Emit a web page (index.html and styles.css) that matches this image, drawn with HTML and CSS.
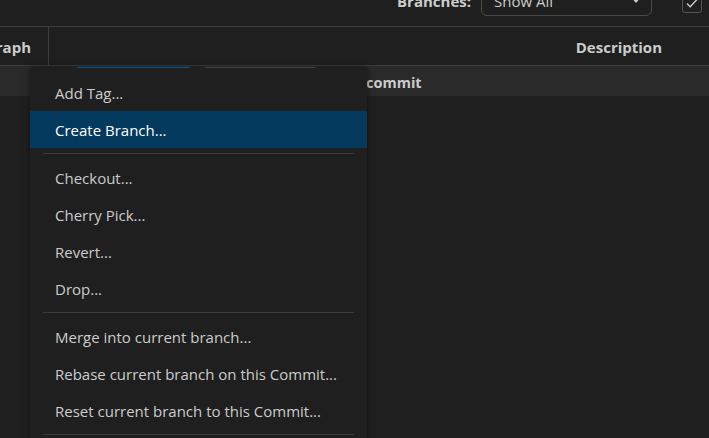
FILE: index.html
```html
<!DOCTYPE html>
<html>
<head>
<meta charset="utf-8">
<link rel="stylesheet" href="styles.css">
</head>
<body>
<div class="app">
  <div class="toolbar">
    <span class="tb-label">Branches:</span>
    <div class="select">
      <span>Show All</span>
      <svg class="caret" width="10" height="6" viewBox="0 0 10 6"><path d="M0 0h10L5 6z" fill="#cccccc"/></svg>
    </div>
    <div class="check">
      <svg width="14" height="12" viewBox="0 0 14 12"><path d="M2 6.5l3.2 3.2L12 2.5" fill="none" stroke="#cccccc" stroke-width="1.4"/></svg>
    </div>
  </div>
  <div class="header">
    <div class="col-graph">raph</div>
    <div class="col-desc">Description</div>
  </div>
  <div class="row">
    <div class="row-graph">
      <span class="pill pill-blue"></span>
      <span class="pill pill-gray"></span>
    </div>
    <div class="row-desc">commit</div>
  </div>
</div>

<div class="menu">
  <div class="item">Add Tag...</div>
  <div class="item active">Create Branch...</div>
  <div class="sep"></div>
  <div class="item">Checkout...</div>
  <div class="item">Cherry Pick...</div>
  <div class="item">Revert...</div>
  <div class="item">Drop...</div>
  <div class="sep"></div>
  <div class="item">Merge into current branch...</div>
  <div class="item">Rebase current branch on this Commit...</div>
  <div class="item">Reset current branch to this Commit...</div>
  <div class="sep"></div>
</div>
</body>
</html>
```

FILE: styles.css
```css
html, body {
  margin: 0;
  padding: 0;
  background: #1f1f1f;
  overflow: hidden;
  height: 438px;
}
body {
  font-family: "Open Sans", "Noto Sans", sans-serif;
  color: #cccccc;
  font-size: 15px;
}
.app {
  width: 709px;
}
.toolbar {
  height: 26px;
  border-bottom: 1px solid #3c3c3c;
  display: flex;
  align-items: flex-start;
  justify-content: flex-end;
  padding-right: 7px;
}
.tb-label {
  font-weight: 700;
  margin-top: -9px;
  margin-right: 10px;
  line-height: 20px;
}
.select {
  width: 171px;
  height: 24px;
  box-sizing: border-box;
  margin-top: -8px;
  border: 1px solid #4a4a4a;
  border-radius: 6px;
  background: #1f1f1f;
  display: flex;
  align-items: flex-start;
  padding: 0 10px 0 12px;
  justify-content: space-between;
  margin-right: 30px;
}
.select span {
  line-height: 20px;
  margin-top: -2px;
}
.caret {
  margin-top: 4px;
}
.check {
  width: 20px;
  height: 20px;
  box-sizing: border-box;
  margin-top: -7px;
  border: 1px solid #555555;
  border-radius: 3px;
  display: flex;
  align-items: center;
  justify-content: center;
}
.header {
  height: 38px;
  border-bottom: 1px solid #3c3c3c;
  display: flex;
  font-weight: 700;
  font-size: 15px;
}
.col-graph {
  width: 49px;
  box-sizing: border-box;
  border-right: 1px solid #3c3c3c;
  display: flex;
  align-items: center;
  justify-content: flex-end;
  padding-right: 17px;
  padding-top: 2px;
}
.col-desc {
  flex: 1;
  display: flex;
  align-items: center;
  justify-content: flex-end;
  padding-right: 47px;
  padding-top: 2px;
}
.row {
  height: 30px;
  background: #2a2a2a;
  display: flex;
}
.row-graph {
  width: 366px;
  position: relative;
}
.pill {
  position: absolute;
  top: 1px;
  height: 9px;
  border-radius: 3px;
}
.pill-blue {
  left: 76px;
  width: 115px;
  border-top: 2px solid #0078d4;
}
.pill-gray {
  left: 204px;
  width: 113px;
  border-top: 2px solid #5a5a5a;
}
.row-desc {
  font-weight: 700;
  font-size: 14.5px;
  display: flex;
  align-items: center;
  padding-top: 2px;
}
.menu {
  position: absolute;
  left: 30px;
  top: 68px;
  width: 337px;
  height: 380px;
  box-sizing: border-box;
  padding-top: 6px;
  background: #1f1f1f;
  box-shadow: 0 0 6px rgba(0, 0, 0, 0.6);
}
.item {
  height: 37px;
  display: flex;
  align-items: center;
  padding-left: 25px;
  padding-top: 1px;
  box-sizing: border-box;
  white-space: nowrap;
}
.item.active {
  background: #04395e;
  color: #ffffff;
}
.sep {
  height: 1px;
  background: #3c3c3c;
  margin: 5px 13px;
}
```
